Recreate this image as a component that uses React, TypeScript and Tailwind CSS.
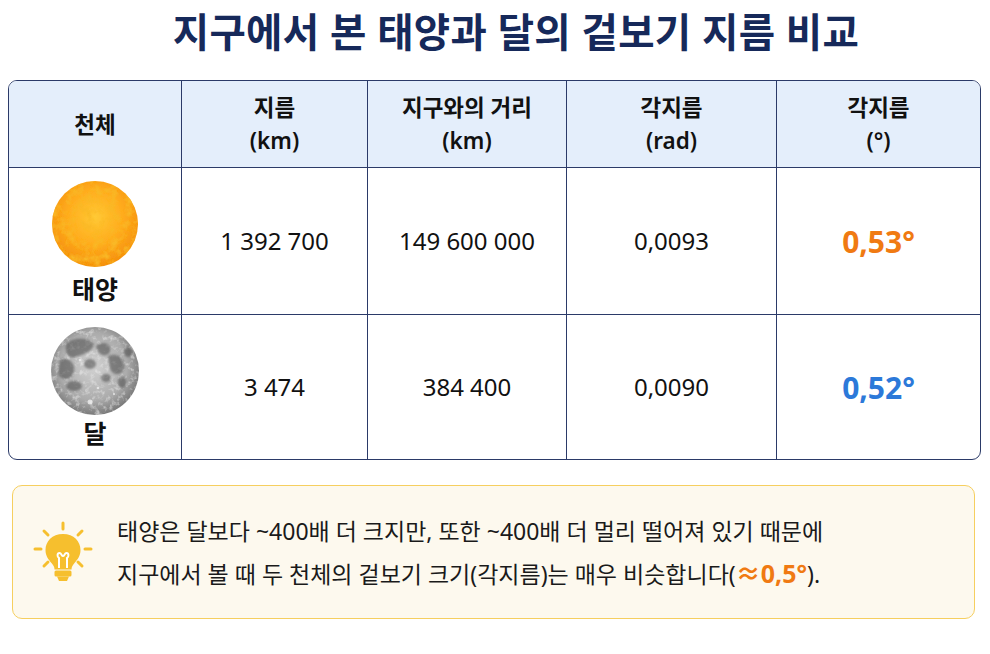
import React from 'react';

const FONT = { fontFamily: '"Noto Sans", "Noto Sans CJK KR", sans-serif' };

const Sun = () => (
  <svg width="88" height="88" viewBox="0 0 88 88">
    <defs>
      <radialGradient id="sunFill" cx="50%" cy="42%" r="58%">
        <stop offset="0%" stopColor="#ffc935" />
        <stop offset="55%" stopColor="#ffac1e" />
        <stop offset="100%" stopColor="#f5900e" />
      </radialGradient>
      <filter id="sunTex" x="0" y="0" width="100%" height="100%">
        <feTurbulence type="fractalNoise" baseFrequency="0.12" numOctaves="4" seed="4" result="n" />
        <feColorMatrix
          in="n"
          type="matrix"
          values="0 0 0 0 0.95  0 0 0 0 0.48  0 0 0 0 0.02  0 0 0 2.6 -1.1"
          result="c"
        />
        <feComposite in="c" in2="SourceGraphic" operator="in" result="t" />
        <feMerge>
          <feMergeNode in="SourceGraphic" />
          <feMergeNode in="t" />
        </feMerge>
      </filter>
    </defs>
    <circle cx="44" cy="44" r="43" fill="url(#sunFill)" filter="url(#sunTex)" />
  </svg>
);

const Moon = () => (
  <svg width="90" height="90" viewBox="0 0 90 90">
    <defs>
      <radialGradient id="moonFill" cx="48%" cy="45%" r="55%">
        <stop offset="0%" stopColor="#d2d2d2" />
        <stop offset="70%" stopColor="#ababab" />
        <stop offset="100%" stopColor="#7a7a7a" />
      </radialGradient>
      <filter id="moonTex" x="0" y="0" width="100%" height="100%">
        <feTurbulence type="fractalNoise" baseFrequency="0.2" numOctaves="3" seed="7" result="n" />
        <feColorMatrix
          in="n"
          type="matrix"
          values="0 0 0 0 0.95  0 0 0 0 0.95  0 0 0 0 0.95  0 0 0 1.2 -0.6"
          result="c"
        />
        <feComposite in="c" in2="SourceGraphic" operator="in" result="t" />
        <feMerge>
          <feMergeNode in="SourceGraphic" />
          <feMergeNode in="t" />
        </feMerge>
      </filter>
      <filter id="mariaBlur">
        <feGaussianBlur stdDeviation="1.2" />
      </filter>
      <clipPath id="moonClip">
        <circle cx="45" cy="45" r="44" />
      </clipPath>
    </defs>
    <circle cx="45" cy="45" r="44" fill="url(#moonFill)" filter="url(#moonTex)" />
    <g clipPath="url(#moonClip)">
      <g fill="#4a4a4a" opacity="0.55" filter="url(#mariaBlur)">
        <path d="M16 18 C24 10 40 12 44 18 C42 26 34 28 28 30 C22 34 14 30 16 18 Z" />
        <path d="M10 34 C16 30 26 36 24 46 C22 54 12 56 8 48 Z" />
        <path d="M46 20 C54 14 62 18 60 26 C56 32 48 30 46 20 Z" />
        <path d="M58 30 C66 26 76 32 74 42 C72 50 62 50 60 42 Z" />
        <ellipse cx="40" cy="38" rx="6" ry="5" />
        <ellipse cx="24" cy="60" rx="8" ry="5" />
        <ellipse cx="78" cy="26" rx="4" ry="5" />
        <ellipse cx="56" cy="52" rx="5" ry="4" />
        <ellipse cx="72" cy="56" rx="4" ry="6" />
      </g>
      <g fill="#f2f2f2" opacity="0.75">
        <circle cx="40" cy="76" r="2.5" />
        <circle cx="30" cy="34" r="1.3" />
        <circle cx="48" cy="62" r="1.3" />
        <circle cx="64" cy="68" r="1.1" />
      </g>
    </g>
  </svg>
);

const Bulb = () => (
  <svg width="60" height="62" viewBox="0 0 60 62">
    <g stroke="#f6bf2e" strokeWidth="3" strokeLinecap="round">
      <line x1="30" y1="2" x2="30" y2="8" />
      <line x1="11" y1="10" x2="15" y2="14" />
      <line x1="49" y1="10" x2="45" y2="14" />
      <line x1="2" y1="28" x2="8" y2="28" />
      <line x1="52" y1="28" x2="58" y2="28" />
      <line x1="11" y1="45" x2="15" y2="41" />
      <line x1="49" y1="45" x2="45" y2="41" />
    </g>
    <path
      d="M30 13 C19 13 12.5 20.5 12.5 29 C12.5 35 15.5 38.5 18.5 42 C20.5 44.5 21.5 46 21.5 48.5 L38.5 48.5 C38.5 46 39.5 44.5 41.5 42 C44.5 38.5 47.5 35 47.5 29 C47.5 20.5 41 13 30 13 Z"
      fill="#f6bf2e"
    />
    <rect x="21.5" y="49.5" width="17" height="6" rx="1.5" fill="#f6bf2e" />
    <path d="M24 55.5 L36 55.5 L34 60 L26 60 Z" fill="#f6bf2e" />
    <path
      d="M26 47 L26 37 C24 36 24 32 26.5 32 C28.5 32 28.5 35 30 35 C31.5 35 31.5 32 33.5 32 C36 32 36 36 34 37 L34 47"
      fill="none"
      stroke="#fff"
      strokeWidth="2"
      strokeLinejoin="round"
    />
  </svg>
);

const HeadCell = ({ top, bottom, last }: { top: string; bottom?: string; last?: boolean }) => (
  <div
    className={`flex flex-col items-center justify-center text-[22.5px] font-semibold leading-[33px] text-[#111] ${
      last ? '' : 'border-r-[1.5px] border-[#2b3a68]'
    }`}
  >
    <span>{top}</span>
    {bottom && <span>{bottom}</span>}
  </div>
);

const Cell = ({ children, last }: { children: React.ReactNode; last?: boolean }) => (
  <div
    className={`flex items-center justify-center text-[24px] text-[#111] ${
      last ? '' : 'border-r-[1.5px] border-[#2b3a68]'
    }`}
  >
    {children}
  </div>
);

const GRID = 'grid grid-cols-[173px_186px_199px_210px_1fr]';

export default function App() {
  return (
    <div className="w-[990px] h-[654px] bg-white overflow-hidden" style={FONT}>
      <h1 className="pl-[42px] pt-[7px] text-center text-[39.5px] font-bold leading-[50px] tracking-[0.3px] text-[#16295a]">
        지구에서 본 태양과 달의 겉보기 지름 비교
      </h1>

      <div className="mx-[8px] mt-[23px] w-[973px] overflow-hidden rounded-[9px] border-[1.5px] border-[#2b3a68]">
        <div className={`${GRID} h-[87px] border-b-[1.5px] border-[#2b3a68] bg-[#e4eefb]`}>
          <HeadCell top="천체" />
          <HeadCell top="지름" bottom="(km)" />
          <HeadCell top="지구와의 거리" bottom="(km)" />
          <HeadCell top="각지름" bottom="(rad)" />
          <HeadCell top="각지름" bottom="(°)" last />
        </div>

        <div className={`${GRID} h-[147px] border-b-[1.5px] border-[#2b3a68]`}>
          <div className="flex flex-col items-center border-r-[1.5px] border-[#2b3a68] pt-[12px]">
            <Sun />
            <span className="mt-[5px] text-[25px] font-bold leading-[32px] text-[#111]">태양</span>
          </div>
          <Cell>1 392 700</Cell>
          <Cell>149 600 000</Cell>
          <Cell>0,0093</Cell>
          <Cell last>
            <span className="text-[30px] font-bold text-[#f07a12]">0,53°</span>
          </Cell>
        </div>

        <div className={`${GRID} h-[144px]`}>
          <div className="flex flex-col items-center border-r-[1.5px] border-[#2b3a68] pt-[11px]">
            <Moon />
            <span className="mt-[1px] text-[25px] font-bold leading-[32px] text-[#111]">달</span>
          </div>
          <Cell>3 474</Cell>
          <Cell>384 400</Cell>
          <Cell>0,0090</Cell>
          <Cell last>
            <span className="text-[30px] font-bold text-[#2c79d9]">0,52°</span>
          </Cell>
        </div>
      </div>

      <div className="mx-[12px] mt-[25px] flex h-[134px] w-[963px] items-center rounded-[10px] border-[1.5px] border-[#f6cf5f] bg-[#fdf9ee] pl-[20px]">
        <Bulb />
        <div className="ml-[24px] text-[23px] leading-[42px] text-[#1a1a1a]">
          <p>태양은 달보다 ~400배 더 크지만, 또한 ~400배 더 멀리 떨어져 있기 때문에</p>
          <p>
            지구에서 볼 때 두 천체의 겉보기 크기(각지름)는 매우 비슷합니다(
            <span className="text-[25px] font-bold text-[#f07a12]">≈0,5°</span>).
          </p>
        </div>
      </div>
    </div>
  );
}
